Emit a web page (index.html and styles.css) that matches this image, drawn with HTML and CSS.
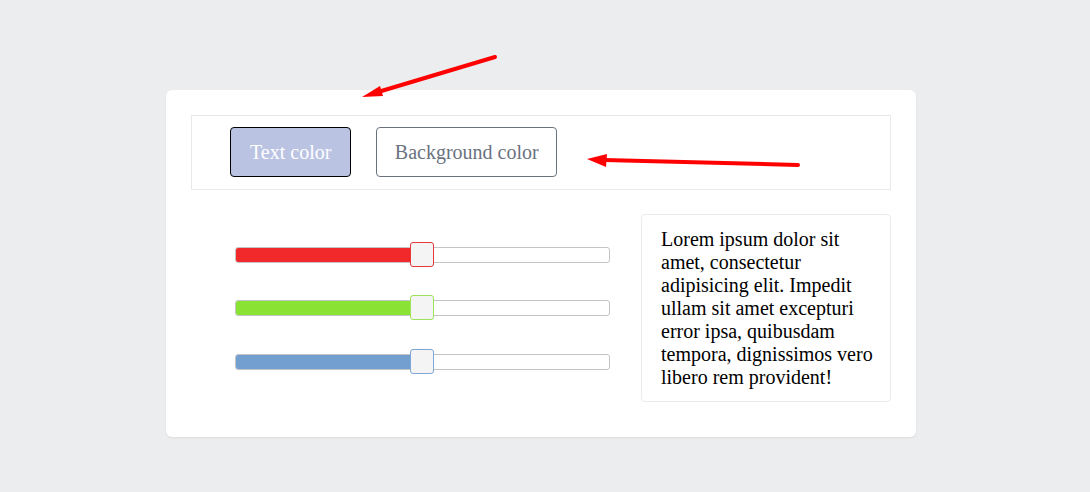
FILE: index.html
```html
<!DOCTYPE html>
<html>
<head>
<meta charset="utf-8">
<link rel="stylesheet" href="styles.css">
</head>
<body>
<div class="page">
  <div class="card">
    <div class="tabs">
      <button class="tab tab-active">Text color</button>
      <button class="tab">Background color</button>
    </div>
    <div class="body">
      <div class="sliders">
        <div class="slider red"><div class="fill"></div><div class="thumb"></div></div>
        <div class="slider green"><div class="fill"></div><div class="thumb"></div></div>
        <div class="slider blue"><div class="fill"></div><div class="thumb"></div></div>
      </div>
      <div class="preview">Lorem ipsum dolor sit amet, consectetur adipisicing elit. Impedit ullam sit amet excepturi error ipsa, quibusdam tempora, dignissimos vero libero rem provident!</div>
    </div>
  </div>
  <svg class="annotations" width="1090" height="492" viewBox="0 0 1090 492">
    <line x1="495" y1="57" x2="378" y2="92" stroke="#ff0000" stroke-width="4" stroke-linecap="round"/>
    <polygon points="362,97 380,86 383,96" fill="#ff0000"/>
    <line x1="798" y1="165" x2="604" y2="160" stroke="#ff0000" stroke-width="4" stroke-linecap="round"/>
    <polygon points="587,159 607,154 606,167" fill="#ff0000"/>
  </svg>
</div>
</body>
</html>
```
FILE: styles.css
```css
* { box-sizing: border-box; }
html, body { margin: 0; padding: 0; }
body {
  background: #ecedef;
  font-family: "Liberation Serif", "Times New Roman", serif;
  width: 1090px;
  height: 492px;
  overflow: hidden;
}
.page {
  position: relative;
  width: 1090px;
  height: 492px;
  padding-top: 90px;
  padding-left: 166px;
}
.card {
  width: 750px;
  height: 347px;
  background: #ffffff;
  border-radius: 6px;
  box-shadow: 0 1px 2px rgba(0,0,0,0.08);
  padding: 25px 25px 35px 25px;
}
.tabs {
  height: 75px;
  border: 1px solid #e8e9eb;
  display: flex;
  align-items: flex-start;
  gap: 25px;
  padding-top: 11px;
  padding-left: 38px;
}
.tab {
  height: 50px;
  font-family: "Liberation Serif", "Times New Roman", serif;
  font-size: 20px;
  border-radius: 4px;
  background: #ffffff;
  border: 1px solid #6b7280;
  color: #6b7280;
  padding: 0 17.5px;
  cursor: pointer;
}
.tab-active {
  background: #bbc3e2;
  border-color: #000000;
  color: #ffffff;
  padding: 0 19px;
}
.body {
  display: flex;
  justify-content: space-between;
  margin-top: 24px;
}
.sliders {
  display: flex;
  flex-direction: column;
  justify-content: center;
  gap: 37.5px;
  padding-left: 44px;
}
.slider {
  position: relative;
  width: 375px;
  height: 16px;
  border: 1px solid #c4c4c4;
  border-radius: 3px;
  background: #ffffff;
}
.fill {
  height: 100%;
  width: 50%;
  border-radius: 2px 0 0 2px;
}
.thumb {
  position: absolute;
  left: 174px;
  top: -6px;
  width: 24px;
  height: 25px;
  background: #f4f4f4;
  border: 1px solid #c4c4c4;
  border-radius: 3px;
}
.red .fill { background: #f2292b; }
.red .thumb { border-color: #e8393a; }
.green .fill { background: #8ae234; }
.green .thumb { border-color: #9ae35a; }
.blue .fill { background: #729fcf; }
.blue .thumb { border-color: #7ea6d6; }
.preview {
  width: 250px;
  height: 188px;
  border: 1px solid #ebebeb;
  border-radius: 4px;
  padding: 13px 12px 13px 19px;
  font-size: 20px;
  line-height: 23px;
  color: #000000;
}
.annotations {
  position: absolute;
  left: 0;
  top: 0;
  pointer-events: none;
}
```
